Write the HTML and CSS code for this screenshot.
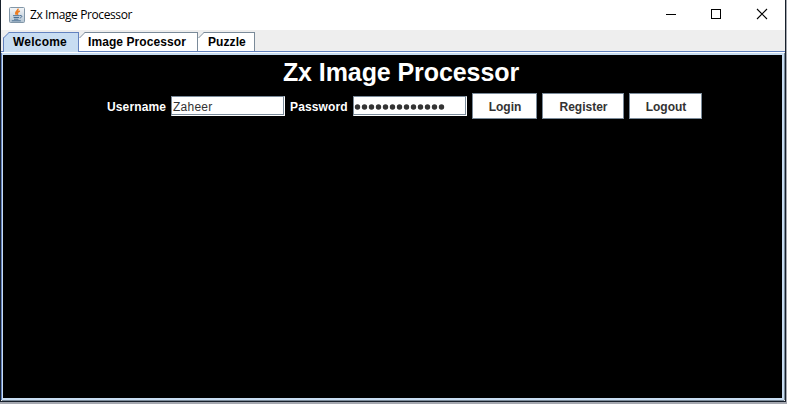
FILE: index.html
```html
<!DOCTYPE html>
<html lang="en">
<head>
<meta charset="utf-8">
<title>Zx Image Processor</title>
<link rel="stylesheet" href="styles.css">
</head>
<body>
<div class="window">
  <header class="titlebar">
    <svg class="app-icon" width="16" height="16" viewBox="0 0 16 16">
      <defs><linearGradient id="g" x2="0" y2="1"><stop stop-color="#f4f6f8"/><stop offset="1" stop-color="#b4c5d3"/></linearGradient></defs>
      <rect x=".5" y=".5" width="15" height="15" rx="1" fill="url(#g)" stroke="#8297a8"/>
      <path d="M9 1.6C9.6 4 5 4.8 7.4 7.8M10.8 4C7.8 5.4 8 6.2 8.8 7.8" fill="none" stroke="#ee7d20" stroke-width="1.6"/>
      <path d="M4 8.7h6.8M4.6 10.5h5.4M5 12.2h4.4M2.8 13.8h9M11 8.6c2.8-.6 2.2 2-.3 2.4" fill="none" stroke="#4a6f93" stroke-width="1"/>
    </svg>
    <span class="title">Zx Image Processor</span>
    <div class="controls">
      <svg width="45" height="30"><path d="M17 14.5h10" stroke="#000"/></svg>
      <svg width="45" height="30"><rect x="17.5" y="9.5" width="9" height="9" fill="none" stroke="#000"/></svg>
      <svg width="45" height="30"><path d="M18 9l10 10M28 9L18 19" stroke="#000" stroke-width="1.1"/></svg>
    </div>
  </header>
  <nav class="tabs">
    <div class="tab active"><svg class="corner" width="6" height="6"><path d="M0 0h6L0 6z" fill="#eee"/><path d="M.5 6L6 .5" stroke="#6382bf"/></svg><span>Welcome</span></div>
    <div class="tab image"><svg class="corner" width="6" height="6"><path d="M0 0h6L0 6z" fill="#eee"/><path d="M.5 6L6 .5" stroke="#7a8a99"/></svg><span>Image Processor</span></div>
    <div class="tab puzzle"><svg class="corner" width="6" height="6"><path d="M0 0h6L0 6z" fill="#eee"/><path d="M.5 6L6 .5" stroke="#7a8a99"/></svg><span>Puzzle</span></div>
  </nav>
  <main class="panel">
    <h1>Zx Image Processor</h1>
    <form class="login">
      <label class="user-label" for="user">Username</label>
      <input id="user" type="text" value="Zaheer">
      <label class="pass-label" for="pass">Password</label>
      <div class="password" id="pass"><svg width="92" height="6"><path d="M3.5 3h84.2" stroke="#333" stroke-width="5.4" stroke-linecap="round" stroke-dasharray="0 7"/></svg></div>
      <button type="button" class="b-login">Login</button>
      <button type="button" class="b-register">Register</button>
      <button type="button" class="b-logout">Logout</button>
    </form>
  </main>
</div>
</body>
</html>
```
FILE: styles.css
```css
* { box-sizing: border-box; }
body { margin: 0; width: 787px; height: 404px; overflow: hidden; background: #a5a8b0; font: bold 12px "Liberation Sans", Arial, sans-serif; }
.window { width: 786px; height: 402px; display: flex; flex-direction: column; background: #eee; border: solid #17202b; border-width: 0 1px 1px; }
.titlebar { height: 30px; flex: none; display: flex; align-items: center; background: #fff; padding: 0 1px 0 8px; }
.app-icon { flex: none; margin-top: -1px; }
.title { margin: -1px 0 0 5px; font: 12px "Open Sans", "Noto Sans", sans-serif; letter-spacing: -.4px; color: #000; }
.controls { display: flex; margin-left: auto; }
.tabs { height: 22px; flex: none; display: flex; padding: 2px 0 0 2px; border-bottom: 1px solid #6382bf; }
.tab { position: relative; height: 19px; line-height: 18px; background: #fff; border: solid #7a8a99; border-width: 1px 1px 0 0; padding-left: 9px; color: #000; white-space: nowrap; letter-spacing: .08px; }
.active { width: 76px; height: 20px; background: #c8ddf2; border-color: #6382bf; border-left-width: 1px; letter-spacing: .22px; }
.image { width: 119px; }
.puzzle { width: 57px; padding-left: 10px; }
.corner { position: absolute; left: 0; top: -1px; }
.active .corner { left: -1px; }
.panel { flex: 1; background: #000; border: 2px solid #c8ddf2; border-left-width: 1px; margin: 1px 1px 1px 1px; box-shadow: 0 1px #7a8a99, -1px 0 #6382bf, 1px 0 #7a8a99, 0 -1px #fff; }
h1 { margin: 2px 0 0 17px; height: 30px; text-align: center; font: bold 25px/30px "Liberation Sans", Arial, sans-serif; letter-spacing: -.08px; color: #fff; }
.login { display: flex; align-items: center; margin: 6px 0 0 104px; height: 26px; color: #fff; }
label { padding-top: 1px; letter-spacing: .14px; }
.user-label { width: 64px; }
.pass-label { width: 63px; margin-left: 5px; }
input, .password { width: 114px; height: 20px; border: 1px solid #7a8a99; border-right-color: #fff; border-bottom-color: #fff; box-shadow: inset -1px -1px #7a8a99; background: #fff; color: #333; padding: 1px 1px 0; border-radius: 0; outline: 0; font: 12px "Liberation Sans", Arial, sans-serif; letter-spacing: .25px; }
.password { display: flex; align-items: center; padding-left: 0; }
button { height: 26px; border: 1px solid #7a8a99; background: #fff; color: #333; font: bold 12px "Liberation Sans", Arial, sans-serif; padding: 2px 0 0 1px; margin-left: 5px; border-radius: 0; }
.b-login { width: 65px; }
.b-register { width: 82px; }
.b-logout { width: 73px; }
```
